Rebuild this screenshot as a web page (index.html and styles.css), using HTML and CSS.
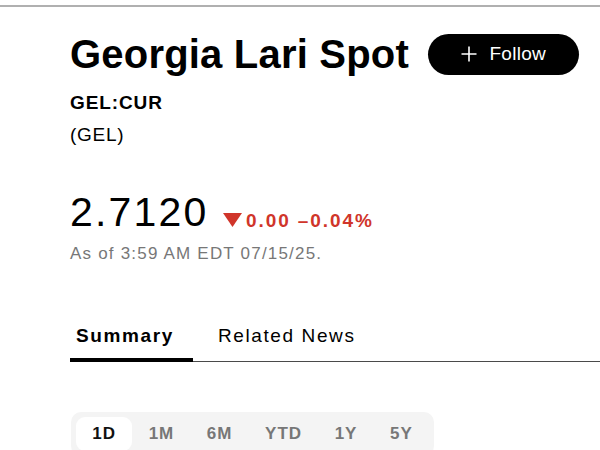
FILE: index.html
```html
<!DOCTYPE html>
<html lang="en">
<head>
<meta charset="utf-8">
<title>Georgia Lari Spot</title>
<link rel="stylesheet" href="styles.css">
</head>
<body>
<div class="topline"></div>
<main class="quote">
  <div class="header">
    <h1 class="title">Georgia Lari Spot</h1>
    <button class="follow" type="button">
      <svg class="plus" width="16" height="16" viewBox="0 0 16 16" aria-hidden="true"><path d="M8 0.5V15.5M0.5 8H15.5" stroke="#fff" stroke-width="1.6" fill="none"/></svg>
      <span>Follow</span>
    </button>
  </div>
  <div class="ticker">GEL:CUR</div>
  <div class="code">(GEL)</div>

  <div class="price-row">
    <span class="price">2.7120</span>
    <span class="change">
      <svg class="tri" width="19" height="14" viewBox="0 0 19 14" aria-hidden="true"><path d="M0 0H19L9.5 14Z" fill="#d0352a"/></svg>
      <span>0.00 –0.04%</span>
    </span>
  </div>
  <div class="asof">As of 3:59 AM EDT 07/15/25.</div>

  <nav class="tabs">
    <span class="tab active">Summary</span>
    <span class="tab">Related News</span>
  </nav>

  <div class="ranges">
    <span class="range on">1D</span>
    <span class="range">1M</span>
    <span class="range">6M</span>
    <span class="range">YTD</span>
    <span class="range">1Y</span>
    <span class="range">5Y</span>
  </div>
</main>
</body>
</html>
```

FILE: styles.css
```css
html, body {
  margin: 0;
  padding: 0;
  background: #fff;
  overflow: hidden;
}
body {
  font-family: "Liberation Sans", Arial, Helvetica, sans-serif;
  color: #000;
}
.topline {
  margin-top: 5px;
  height: 2px;
  background: #b0b0b0;
}
.quote {
  padding-left: 70px;
}
.header {
  display: flex;
  align-items: center;
  gap: 19px;
  margin-top: 23px;
  height: 48px;
}
.title {
  margin: 0;
  font-size: 40px;
  line-height: 48px;
  font-weight: 700;
  letter-spacing: 0.2px;
  white-space: nowrap;
}
.follow {
  display: flex;
  align-items: center;
  justify-content: center;
  gap: 12.5px;
  width: 151px;
  height: 41px;
  flex: none;
  border: 0;
  border-radius: 21px;
  background: #000;
  color: #fff;
  font-family: inherit;
  font-size: 19px;
  letter-spacing: 0.3px;
  font-weight: 400;
  padding: 0;
}
.plus { display: block; }
.ticker {
  margin-top: 9px;
  font-size: 19px;
  line-height: 32px;
  font-weight: 700;
  letter-spacing: 0.9px;
}
.code {
  font-size: 19px;
  line-height: 32px;
  font-weight: 400;
  letter-spacing: 0.7px;
}
.price-row {
  display: flex;
  align-items: baseline;
  margin-top: 37px;
  height: 48px;
}
.price {
  font-size: 41px;
  line-height: 48px;
  font-weight: 400;
  letter-spacing: 2.2px;
}
.change {
  display: inline-flex;
  align-items: baseline;
  gap: 4px;
  margin-left: 14.5px;
  color: #d0352a;
  font-size: 19px;
  font-weight: 700;
  letter-spacing: 1.9px;
  position: relative;
  top: 1px;
}
.tri {
  display: block;
  margin-bottom: 1px;
}
.asof {
  margin-top: 6px;
  font-size: 17px;
  line-height: 24px;
  letter-spacing: 1.2px;
  color: #777;
}
.tabs {
  display: flex;
  margin-top: 58px;
  border-bottom: 1px solid #4a4a4a;
}
.tab {
  font-size: 19px;
  line-height: 24px;
  letter-spacing: 1.6px;
  padding: 0 0 10px 0;
  margin-bottom: -1px;
  border-bottom: 4px solid transparent;
  white-space: nowrap;
}
.tab.active {
  font-weight: 700;
  letter-spacing: 1.6px;
  padding-left: 6px;
  width: 117px;
  border-bottom-color: #000;
}
.tab + .tab {
  margin-left: 25px;
}
.ranges {
  display: inline-flex;
  margin-top: 50px;
  margin-left: 1px;
  padding: 5px;
  border-radius: 10px;
  background: #f4f4f4;
}
.range {
  padding: 7px 16.3px;
  font-size: 17px;
  line-height: 20px;
  font-weight: 700;
  letter-spacing: 1px;
  color: #777;
  border-radius: 9px;
}
.range.on {
  background: #fff;
  color: #111;
}
```
